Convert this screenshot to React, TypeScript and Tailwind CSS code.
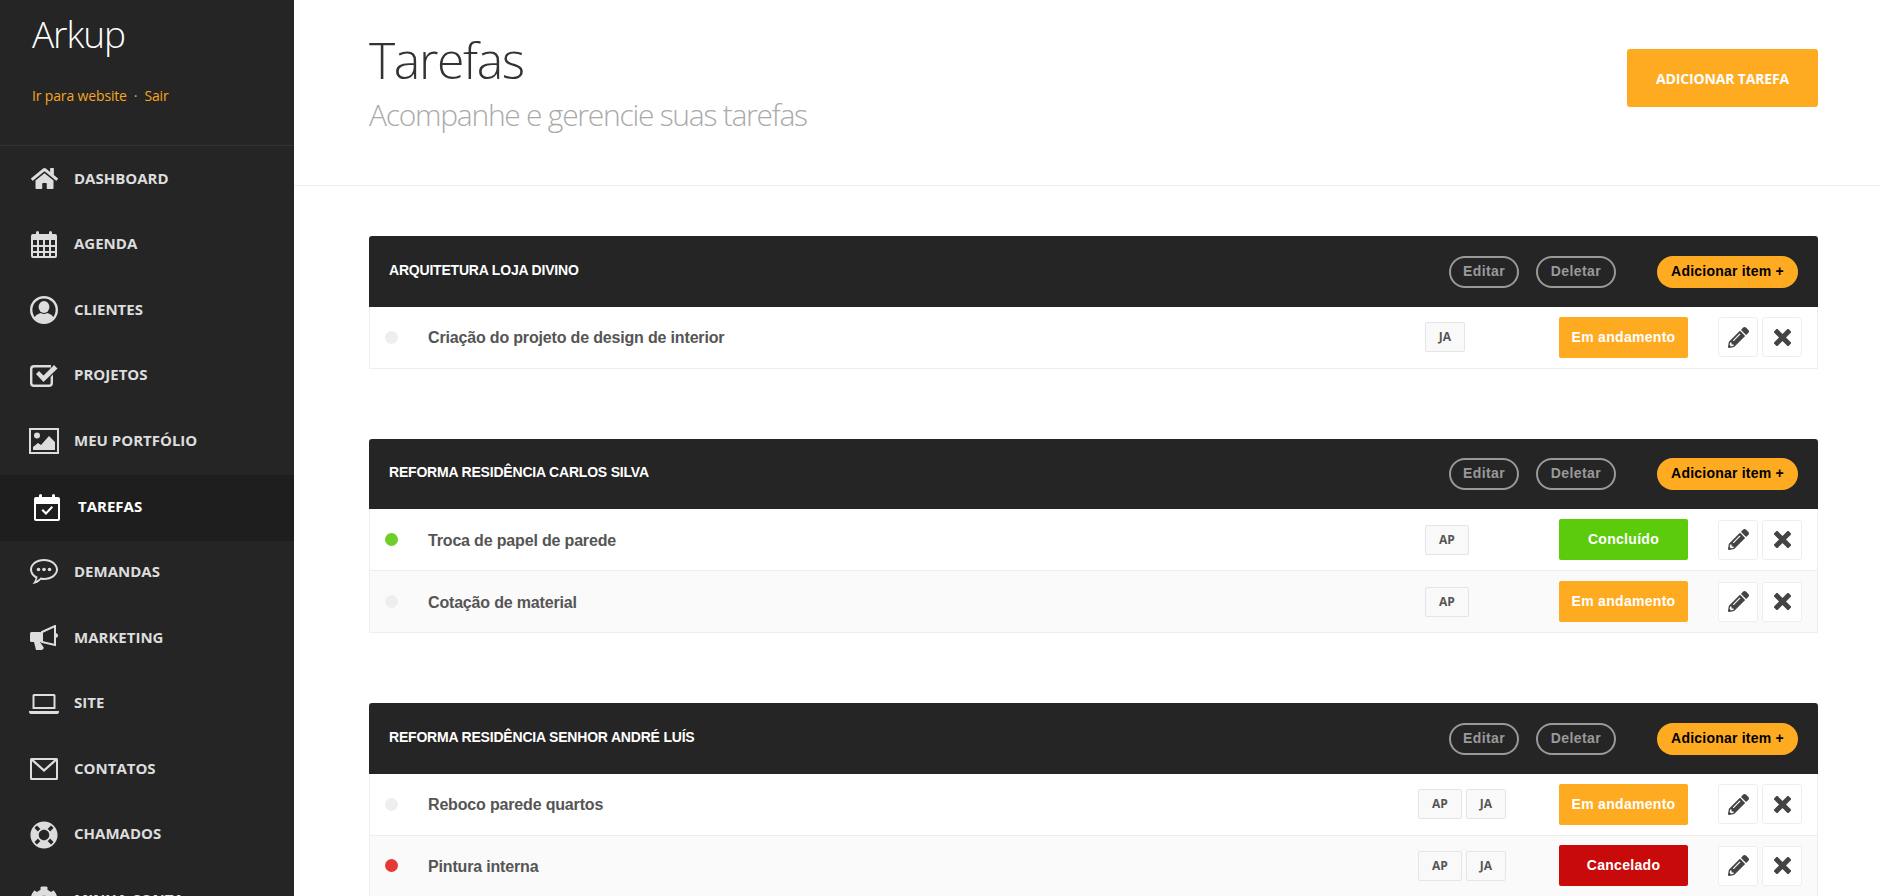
import { FaCog, FaHome, FaLifeRing, FaPencilAlt } from "react-icons/fa"

const IconCalendar = () => (
  <svg width="28" height="28" viewBox="0 0 28 28" fill="#ddd">
    <path fillRule="evenodd" d="M3 4h3V2.5a1.5 1.5 0 0 1 3 0V4h10V2.5a1.5 1.5 0 0 1 3 0V4h3a2 2 0 0 1 2 2v20a2 2 0 0 1-2 2H3a2 2 0 0 1-2-2V6a2 2 0 0 1 2-2zM3 10v5h4v-5zm6 0v5h4v-5zm6 0v5h4v-5zm6 0v5h4v-5zM3 17v4h4v-4zm6 0v4h4v-4zm6 0v4h4v-4zm6 0v4h4v-4zM3 23v3h4v-3zm6 0v3h4v-3zm6 0v3h4v-3zm6 0v3h4v-3z" />
  </svg>
)

const IconUser = () => (
  <svg width="28" height="28" viewBox="0 0 28 28" fill="#ddd">
    <path fillRule="evenodd" d="M14 0a14 14 0 1 1 0 28a14 14 0 0 1 0-28zm0 2.4a11.6 11.6 0 1 0 0 23.2a11.6 11.6 0 0 0 0-23.2z" />
    <ellipse cx="14" cy="11" rx="5.4" ry="6" />
    <path d="M4.5 22c1-3.5 4.5-4.5 6.5-5 1.8 1.2 4.2 1.2 6 0 2 .5 5.5 1.5 6.5 5-2.2 2.6-5.500 4.300-9.500 4.300s-7.300-1.700-9.500-4.300z" />
  </svg>
)

const IconCheck = () => (
  <svg width="28" height="24" viewBox="0 0 28 24" fill="#ddd">
    <path d="M4 1h17v2.400H4A1.600 1.600 0 0 0 2.400 5v14A1.600 1.600 0 0 0 4 20.600h15a1.600 1.600 0 0 0 1.600-1.600v-6l2.400-2.400V19a4 4 0 0 1-4 4H4a4 4 0 0 1-4-4V5a4 4 0 0 1 4-4z" />
    <path d="M6 10l3-3 4.500 4.500L24 1l3.500 3.500L13.500 18z" />
  </svg>
)

const IconImage = () => (
  <svg width="30" height="26" viewBox="0 0 30 26" fill="#ddd">
    <path fillRule="evenodd" d="M0 0h30v26H0zm2 2v22h26V2z" />
    <circle cx="8" cy="7.500" r="3" />
    <path d="M4 22v-3l5-4 3 2 8-9 6 6v8z" />
  </svg>
)

const IconTask = ({ color }: { color: string }) => (
  <svg width="28" height="28" viewBox="0 0 28 28" fill={color}>
    <path fillRule="evenodd" d="M3 4h3V2.500a1.500 1.500 0 0 1 3 0V4h10V2.500a1.500 1.500 0 0 1 3 0V4h3a2 2 0 0 1 2 2v20a2 2 0 0 1-2 2H3a2 2 0 0 1-2-2V6a2 2 0 0 1 2-2zM3 11v15h22V11z" />
    <path d="M8.500 17.500l1.500-1.500 3 3 5.500-6 1.500 1.500-7 7.500z" />
  </svg>
)

const IconChat = () => (
  <svg width="28" height="26" viewBox="0 0 28 26" fill="#ddd">
    <path fillRule="evenodd" d="M14 0c7.700 0 14 4.700 14 10.500S21.700 21 14 21c-1 0-2-.100-3-.200C9 23 6 25 2.500 25c1.400-1.600 2.600-3.500 3-5.800C2.200 17.300 0 14.100 0 10.500 0 4.700 6.300 0 14 0zm0 2C7.400 2 2 5.800 2 10.500c0 3 2.200 5.800 5.600 7.300-.200 1.500-.700 2.800-1.400 4 1.900-.700 3.500-2 4.300-3.200 1.100.200 2.300.400 3.500.400 6.600 0 12-3.800 12-8.500S20.600 2 14 2z" />
    <circle cx="8.500" cy="10.500" r="1.800" />
    <circle cx="14" cy="10.500" r="1.800" />
    <circle cx="19.500" cy="10.500" r="1.800" />
  </svg>
)

const IconMegaphone = () => (
  <svg width="28" height="26" viewBox="0 0 28 26" fill="#ddd">
    <rect x="0" y="7" width="12" height="10" rx="1.500" />
    <path d="M4 17h6l4 6-2 2H6z" />
    <path d="M12 7L25 1v19L12 17z" fill="none" stroke="#ddd" strokeWidth="2" />
    <path d="M25 8c2 0 3 1 3 2.500S27 13 25 13z" />
  </svg>
)

const IconLaptop = () => (
  <svg width="30" height="20" viewBox="0 0 30 20" fill="#ddd">
    <path fillRule="evenodd" d="M5 0h20a1.500 1.500 0 0 1 1.500 1.500V15h-23V1.500A1.500 1.500 0 0 1 5 0zm.500 2v11h19V2z" />
    <path d="M0 17h30v1a2 2 0 0 1-2 2H2a2 2 0 0 1-2-2z" />
  </svg>
)

const IconMail = () => (
  <svg width="28" height="22" viewBox="0 0 28 22" fill="#ddd">
    <path fillRule="evenodd" d="M1.500 0h25A1.500 1.500 0 0 1 28 1.500v19a1.500 1.500 0 0 1-1.500 1.500h-25A1.500 1.500 0 0 1 0 20.500v-19A1.500 1.500 0 0 1 1.500 0zM4 2l10 9 10-9zM2 3.300V20h24V3.300L14 14z" />
  </svg>
)

const IconClose = () => (
  <svg width="17" height="17" viewBox="0 0 17 17">
    <path d="M3 3l11 11M14 3L3 14" stroke="#444444" strokeWidth="5" strokeLinecap="square" />
  </svg>
)

const navItems = [
  { label: "DASHBOARD", icon: <FaHome size={27} color="#ddd" /> },
  { label: "AGENDA", icon: <IconCalendar /> },
  { label: "CLIENTES", icon: <IconUser /> },
  { label: "PROJETOS", icon: <IconCheck /> },
  { label: "MEU PORTFÓLIO", icon: <IconImage /> },
  { label: "TAREFAS", icon: <IconTask color="#fff" />, active: true },
  { label: "DEMANDAS", icon: <IconChat /> },
  { label: "MARKETING", icon: <IconMegaphone /> },
  { label: "SITE", icon: <IconLaptop /> },
  { label: "CONTATOS", icon: <IconMail /> },
  { label: "CHAMADOS", icon: <FaLifeRing size={28} color="#ddd" /> },
  { label: "MINHA CONTA", icon: <FaCog size={28} color="#ddd" /> },
]

const statusColors: Record<string, string> = {
  "Em andamento": "bg-[#ffab22]",
  Concluído: "bg-[#5bcb0b]",
  Cancelado: "bg-[#c90a0a]",
}

type Task = { name: string; dot: string; people: string[]; status: string }

const panels: { title: string; tasks: Task[] }[] = [
  {
    title: "ARQUITETURA LOJA DIVINO",
    tasks: [{ name: "Criação do projeto de design de interior", dot: "bg-[#eeeeee]", people: ["JA"], status: "Em andamento" }],
  },
  {
    title: "REFORMA RESIDÊNCIA CARLOS SILVA",
    tasks: [
      { name: "Troca de papel de parede", dot: "bg-[#6fce2a]", people: ["AP"], status: "Concluído" },
      { name: "Cotação de material", dot: "bg-[#eeeeee]", people: ["AP"], status: "Em andamento" },
    ],
  },
  {
    title: "REFORMA RESIDÊNCIA SENHOR ANDRÉ LUÍS",
    tasks: [
      { name: "Reboco parede quartos", dot: "bg-[#eeeeee]", people: ["AP", "JA"], status: "Em andamento" },
      { name: "Pintura interna", dot: "bg-[#e53935]", people: ["AP", "JA"], status: "Cancelado" },
    ],
  },
]

function Sidebar() {
  return (
    <aside className="w-[294px] flex-shrink-0 bg-[#252525] font-['Open_Sans',sans-serif]">
      <div className="h-[146px] border-b border-[#333333] px-8 pt-[9px]">
        <div className="text-[37px] leading-[50px] font-light text-white tracking-[-1.1px]">Arkup</div>
        <div className="mt-[27px] text-sm leading-5 text-[#f5a623] tracking-[-0.15px]">
          Ir para website<span className="mx-[7px]">·</span>Sair
        </div>
      </div>
      <nav className="pt-[1px]">
        {navItems.map((item) => (
          <div
            key={item.label}
            className={
              item.active
                ? "h-[65.6px] flex items-center pl-[33px] bg-[#1e1e1e] text-white font-bold text-[15px]"
                : "h-[65.6px] flex items-center pl-[29px] text-[#dddddd] font-bold text-[15px]"
            }
          >
            <div className={item.active ? "w-[45px] -mt-[2px] flex justify-start" : "w-[45px] -mt-[2px] flex justify-center pr-[15px]"}>{item.icon}</div>
            <span className="-mt-[4px]">{item.label}</span>
          </div>
        ))}
      </nav>
    </aside>
  )
}

function TaskRow({ task, odd }: { task: Task; odd: boolean }) {
  return (
    <div className={`h-[61.8px] flex items-center border-x border-b border-[#eeeeee] pl-[15px] pr-[15px] ${odd ? "bg-[#fafafa]" : "bg-white"}`}>
      <div className={`w-[13px] h-[13px] rounded-full ${task.dot}`}></div>
      <div className="flex-1 ml-[30px] pt-[2px] text-base font-bold tracking-[-0.17px] text-[#555555]">{task.name}</div>
      <div className={`w-[141px] flex gap-1 ${task.people.length === 1 ? "pl-[7px]" : ""}`}>
        {task.people.map((p) => (
          <div
            key={p}
            className={`h-[30px] ${p === "AP" ? "w-[44px]" : "w-[40px]"} flex items-center justify-center rounded-[2px] border border-[#e5e5e5] bg-[#f9f9f9] font-['Open_Sans',sans-serif] text-xs font-bold text-[#555555]`}
          >
            {p}
          </div>
        ))}
      </div>
      <div className={`w-[129px] h-[41px] flex items-center justify-center rounded-[2px] pb-[1px] text-sm font-bold tracking-[0.3px] text-white ${statusColors[task.status]}`}>
        {task.status}
      </div>
      <div className="ml-[30px] flex gap-1">
        <div className="w-10 h-10 flex items-center justify-center rounded-[3px] border border-[#eeeeee] bg-white">
          <FaPencilAlt size={21} color="#444444" />
        </div>
        <div className="w-10 h-10 flex items-center justify-center rounded-[3px] border border-[#eeeeee] bg-white">
          <IconClose />
        </div>
      </div>
    </div>
  )
}

export default function App() {
  return (
    <div className="h-[896px] w-[1880px] flex overflow-hidden bg-white font-['Liberation_Sans',sans-serif]">
      <Sidebar />
      <main className="flex-1 min-w-0">
        <header className="h-[186px] border-b border-[#eeeeee] pl-[75px] pr-[62px] flex justify-between">
          <div className="pt-[26px] font-['Open_Sans',sans-serif]">
            <h1 className="text-[50px] leading-[68px] font-light text-[#333333] tracking-[-1.4px]">Tarefas</h1>
            <p className="mt-[1px] text-[30px] leading-[40px] font-light text-[#aaaaaa] tracking-[-1.27px]">Acompanhe e gerencie suas tarefas</p>
          </div>
          <button className="mt-[49px] w-[191px] h-[58px] rounded-[3px] bg-[#ffab22] pt-[2px] font-['Open_Sans',sans-serif] text-sm font-bold tracking-[-0.15px] text-white">
            ADICIONAR TAREFA
          </button>
        </header>
        <div className="pl-[75px] pr-[62px] pt-[50px] flex flex-col gap-[70px]">
          {panels.map((panel) => (
            <section key={panel.title}>
              <div className="h-[70.8px] flex items-center justify-between rounded-t-[3px] bg-[#252525] pt-[1px] pl-[20px] pr-[20px]">
                <div className="-mt-[4px] text-sm font-bold tracking-[-0.2px] text-white">{panel.title}</div>
                <div className="flex items-center">
                  <div className="w-[70px] h-8 flex items-center justify-center rounded-full border-2 border-[#999999] pb-[2px] text-sm font-bold tracking-[0.4px] text-[#999999]">Editar</div>
                  <div className="ml-[17px] w-[80px] h-8 flex items-center justify-center rounded-full border-2 border-[#999999] pb-[2px] text-sm font-bold tracking-[0.4px] text-[#999999]">Deletar</div>
                  <div className="ml-[41px] w-[141px] h-8 flex items-center justify-center rounded-full bg-[#ffab22] pb-[2px] text-sm font-bold tracking-[0.22px] text-black">Adicionar item +</div>
                </div>
              </div>
              {panel.tasks.map((task, i) => (
                <TaskRow key={task.name} task={task} odd={i % 2 === 1} />
              ))}
            </section>
          ))}
        </div>
      </main>
    </div>
  )
}
